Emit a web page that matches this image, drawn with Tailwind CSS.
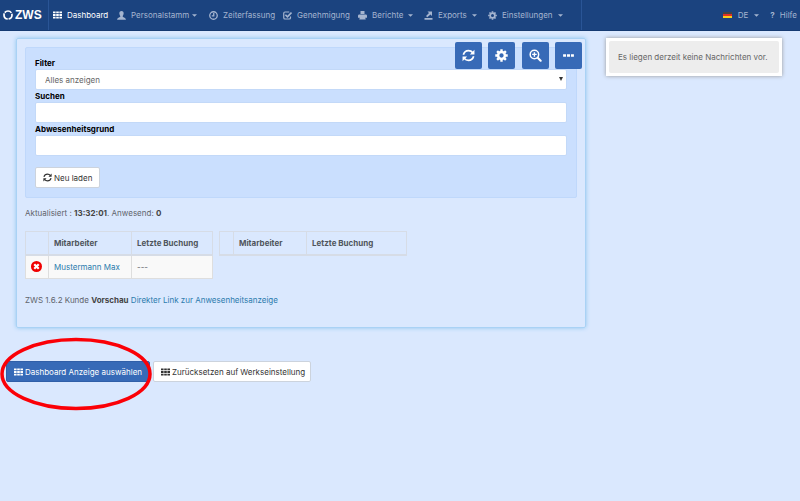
<!DOCTYPE html>
<html lang="de">
<head>
<meta charset="utf-8">
<meta name="viewport" content="width=device-width, initial-scale=1">
<title>ZWS Dashboard</title>
<script src="https://cdn.jsdelivr.net/npm/@tailwindcss/browser@4"></script>
</head>
<body class="min-h-screen bg-[#dae8fe] font-[Inter,'Liberation_Sans',Arial,sans-serif] text-[8px] leading-[12px] text-[#5f646c]">

<svg class="hidden" aria-hidden="true">
  <symbol id="grid" viewBox="0 0 9 8"><path fill="currentColor" d="M0 .5h2.600v1.800H0zM3.200.5h2.600v1.800H3.200zM6.400.5H9v1.800H6.400zM0 3.100h2.600v1.800H0zM3.200 3.100h2.600v1.800H3.200zM6.400 3.100H9v1.800H6.400zM0 5.700h2.600v1.800H0zM3.200 5.700h2.600v1.800H3.200zM6.400 5.700H9v1.800H6.400z"/></symbol>
  <symbol id="refresh" viewBox="0 0 24 24"><path fill="none" stroke="currentColor" stroke-width="3.200" d="M2.500 10.500C4 5.500 7.500 3 12 3c3.300 0 6 1.500 8 4M21.500 13.500C20 18.500 16.500 21 12 21c-3.300 0-6-1.500-8-4"/><path fill="currentColor" d="M23 1.500V10h-8.500zM1 22.500V14h8.500z"/></symbol>
  <symbol id="gear" viewBox="0 0 24 24"><circle cx="12" cy="12" r="6.300" fill="none" stroke="currentColor" stroke-width="4.600"/><path stroke="currentColor" stroke-width="4.400" d="M12 .5v4M12 19.500v4M.5 12h4M19.500 12h4M3.900 3.900l2.800 2.800M17.300 17.300l2.800 2.800M3.900 20.100l2.800-2.800M17.300 6.700l2.800-2.800"/></symbol>
  <symbol id="zoomin" viewBox="0 0 24 24"><circle cx="10" cy="10" r="7.800" fill="none" stroke="currentColor" stroke-width="2.800"/><path fill="none" stroke="currentColor" stroke-width="2.600" d="M10 5.800v8.400M5.800 10h8.400"/><path stroke="currentColor" stroke-width="4" stroke-linecap="round" d="M16.500 16.500l5 5"/></symbol>
  <symbol id="dots" viewBox="0 0 24 24"><path fill="currentColor" d="M2 9.500h5.500v5H2zM9.250 9.500h5.500v5h-5.500zM16.500 9.500H22v5h-5.500z"/></symbol>
  <symbol id="caret" viewBox="0 0 10 6"><path fill="currentColor" d="M0 .5h10L5 5.500z"/></symbol>
</svg>

<header class="flex h-[31px] items-stretch border-b border-[#153a72] bg-[#1b437f] text-[#a5b5d0]">
  <a href="#" class="flex w-[49px] shrink-0 items-center border-r border-[#2a5596] pl-[3px]" aria-label="ZWS">
    <svg class="h-[10px] w-[10px]" viewBox="0 0 20 20" aria-hidden="true"><circle cx="10" cy="10" r="8" fill="none" stroke="#fff" stroke-width="3.400" stroke-dasharray="15 1.750" stroke-dashoffset="4"/></svg>
    <span class="ml-[2px] font-['Liberation_Sans',Arial,sans-serif] text-[12px] leading-[14px] font-bold text-white">ZWS</span>
  </a>
  <nav class="flex w-[533px] shrink-0 items-center gap-[8px] border-r border-[#2a5596] pl-[4px] whitespace-nowrap" aria-label="Hauptmenü">
    <a href="#" class="flex w-[56px] items-center gap-[5px] text-white"><svg class="h-[8px] w-[9px] shrink-0"><use href="#grid"/></svg>Dashboard</a>
    <a href="#" class="flex w-[84px] items-center gap-[5px]">
      <svg class="h-[9px] w-[9px] shrink-0" viewBox="0 0 18 18"><path fill="currentColor" d="M9 0c3 0 4.500 2 4.300 5-.2 2.500-1.300 3.500-1.800 5v1.500c1.500 1.500 6 1.500 6.500 6H0c.5-4.500 5-4.500 6.500-6V10C6 8.500 4.900 7.500 4.700 5 4.500 2 6 0 9 0z"/></svg>Personalstamm<svg class="-ml-[2px] h-[3px] w-[5px] shrink-0"><use href="#caret"/></svg></a>
    <a href="#" class="flex w-[66px] items-center gap-[5px]">
      <svg class="h-[9px] w-[9px] shrink-0" viewBox="0 0 18 18"><path fill="none" stroke="currentColor" stroke-width="2.600" d="M16.500 9a7.500 7.500 0 1 1-15 0 7.500 7.500 0 0 1 15 0zM9.500 4v5.800H5.500"/></svg>Zeiterfassung</a>
    <a href="#" class="flex w-[67px] items-center gap-[5px]">
      <svg class="h-[9px] w-[9px] shrink-0" viewBox="0 0 18 18"><path fill="none" stroke="currentColor" stroke-width="2.400" d="M12.500 2H4Q1.500 2 1.500 4.500v9Q1.500 16 4 16h8.500q2.500 0 2.500-2.500V11"/><path fill="none" stroke="currentColor" stroke-width="3.200" d="M4.800 7.500l4 4L17 3"/></svg>Genehmigung</a>
    <a href="#" class="flex w-[58px] items-center gap-[5px]">
      <svg class="h-[9px] w-[9px] shrink-0" viewBox="0 0 18 18"><path fill="currentColor" d="M5 0h8v6H5zM1.500 7h15L18 9v4.500H0V9zM4 12h10l1.500 5h-13z"/></svg>Berichte<svg class="h-[3px] w-[5px] shrink-0"><use href="#caret"/></svg></a>
    <a href="#" class="flex w-[56px] items-center gap-[5px]">
      <svg class="h-[9px] w-[9px] shrink-0" viewBox="0 0 18 18"><path fill="currentColor" d="M1 14h16v3.500H1zM7 1h9v9l-3-3-6.500 5.500-2.500-2.500L10 4z"/></svg>Exports<svg class="h-[3px] w-[5px] shrink-0"><use href="#caret"/></svg></a>
    <a href="#" class="flex items-center gap-[5px]"><svg class="h-[9px] w-[9px] shrink-0"><use href="#gear"/></svg>Einstellungen<svg class="h-[3px] w-[5px] shrink-0"><use href="#caret"/></svg></a>
  </nav>
  <div class="ml-auto flex items-center gap-[11px] pr-[3px] whitespace-nowrap">
    <a href="#" class="flex items-center gap-[6px]">
      <svg class="h-[6px] w-[9px] shrink-0" viewBox="0 0 9 6"><path fill="#444" d="M0 0h9v2H0z"/><path fill="#e03024" d="M0 2h9v2H0z"/><path fill="#f8ce1a" d="M0 4h9v2H0z"/></svg>DE<svg class="h-[3px] w-[5px] shrink-0"><use href="#caret"/></svg></a>
    <a href="#" class="flex items-center gap-[5px]"><b>?</b>Hilfe</a>
  </div>
</header>

<main class="pt-[7px]">
  <div class="grid grid-cols-[minmax(0,570fr)_minmax(0,176fr)] items-start gap-[20px] pr-[18px] pl-[16px]">
    <section class="relative rounded-[2px] border border-[#a9d2f5] px-[8px] pt-[8px] pb-[21px] shadow-[0_0_4px_#8fc6ef]">
      <div class="absolute top-[3px] right-[3px] flex w-[127px] justify-between text-white">
        <button type="button" aria-label="Aktualisieren" class="flex h-[27px] w-[27px] items-center justify-center rounded-[2px] bg-[#376ab7]"><svg class="h-[13px] w-[13px]"><use href="#refresh"/></svg></button>
        <button type="button" aria-label="Einstellungen" class="flex h-[27px] w-[27px] items-center justify-center rounded-[2px] bg-[#376ab7]"><svg class="h-[13px] w-[13px]"><use href="#gear"/></svg></button>
        <button type="button" aria-label="Vergrößern" class="flex h-[27px] w-[27px] items-center justify-center rounded-[2px] bg-[#376ab7]"><svg class="h-[13px] w-[13px]"><use href="#zoomin"/></svg></button>
        <button type="button" aria-label="Mehr" class="flex h-[27px] w-[27px] items-center justify-center rounded-[2px] bg-[#376ab7]"><svg class="h-[13px] w-[13px]"><use href="#dots"/></svg></button>
      </div>

      <form class="rounded-[2px] border border-[#bfd8fb] bg-[#cadffe] px-[9px] pt-[9px] pb-[9px]">
        <label for="filter" class="block h-[12px] font-bold text-black">Filter</label>
        <div class="relative">
          <select id="filter" class="block h-[21px] w-full appearance-none rounded-[2px] border border-[#c3d9f8] bg-white px-[9px] leading-[12px] text-[#666]"><option>Alles anzeigen</option></select>
          <svg class="pointer-events-none absolute top-[8px] right-[4px] h-[4px] w-[4px] text-[#333]" viewBox="0 0 8 8"><path fill="currentColor" d="M0 0h8L4 8z"/></svg>
        </div>
        <label for="suchen" class="block h-[12px] font-bold text-black">Suchen</label>
        <input id="suchen" type="text" class="block h-[21px] w-full rounded-[2px] border border-[#c3d9f8] bg-white px-[9px]">
        <label for="grund" class="block h-[12px] font-bold text-black">Abwesenheitsgrund</label>
        <input id="grund" type="text" class="block h-[21px] w-full rounded-[2px] border border-[#c3d9f8] bg-white px-[9px]">
        <button type="button" class="mt-[11px] flex h-[21px] items-center gap-[2px] rounded-[2px] border border-[#ccd3dd] bg-white px-[7px] text-[#333]"><svg class="h-[9px] w-[9px]"><use href="#refresh"/></svg>Neu laden</button>
      </form>

      <p class="mt-[9px]">Aktualisiert : <b class="text-[#444]">13:32:01</b>. Anwesend: <b class="text-[#444]">0</b></p>

      <div class="mt-[12px] flex items-start gap-[6px]">
        <table class="w-[188px] table-fixed border-collapse text-left">
          <thead><tr class="h-[23px] text-[#50555c]">
            <th class="w-[23px] border border-b-2 border-[#d6dce6]"></th>
            <th class="w-[83px] border border-b-2 border-[#d6dce6] px-[5px]">Mitarbeiter</th>
            <th class="border border-b-2 border-[#d6dce6] px-[5px]">Letzte Buchung</th>
          </tr></thead>
          <tbody><tr class="h-[24px] bg-[#f9f9f9]">
            <td class="border border-[#dedede] px-[5px]"><svg class="h-[11px] w-[11px]" viewBox="0 0 22 22" role="img" aria-label="Abwesend"><circle cx="11" cy="11" r="11" fill="#f00000"/><path stroke="#fff" stroke-width="4.400" d="M6.500 6.500l9 9M15.500 6.500l-9 9"/></svg></td>
            <td class="border border-[#dedede] px-[5px]"><a href="#" class="text-[#2b7bad]">Mustermann Max</a></td>
            <td class="border border-[#dedede] px-[5px]">---</td>
          </tr></tbody>
        </table>
        <table class="w-[188px] table-fixed border-collapse text-left">
          <thead><tr class="h-[23px] text-[#50555c]">
            <th class="w-[14px] border border-b-2 border-[#d6dce6]"></th>
            <th class="w-[73px] border border-b-2 border-[#d6dce6] px-[5px]">Mitarbeiter</th>
            <th class="border border-b-2 border-[#d6dce6] px-[5px]">Letzte Buchung</th>
          </tr></thead>
        </table>
      </div>

      <p class="mt-[15px]">ZWS 1.6.2 Kunde <b class="text-[#444]">Vorschau</b> <a href="#" class="text-[#2b7bad]">Direkter Link zur Anwesenheitsanzeige</a></p>
    </section>

    <aside class="bg-white p-[3px] shadow-[0_0_4px_#999]">
      <p class="rounded-[2px] bg-[#ededed] px-[9px] py-[10px] whitespace-nowrap text-[#666]">Es liegen derzeit keine Nachrichten vor.</p>
    </aside>
  </div>

  <div class="relative mt-[33px] flex gap-[3px] px-[6px]">
    <button type="button" class="flex h-[21px] w-[144px] items-center gap-[2px] rounded-[2px] border border-[#305fa8] bg-[#376ab7] px-[7px] whitespace-nowrap text-white"><svg class="h-[8px] w-[9px] shrink-0"><use href="#grid"/></svg>Dashboard Anzeige auswählen</button>
    <button type="button" class="flex h-[21px] w-[158px] items-center gap-[2px] rounded-[2px] border border-[#ccd3dd] bg-white px-[7px] whitespace-nowrap text-[#333]"><svg class="h-[8px] w-[9px] shrink-0"><use href="#grid"/></svg>Zurücksetzen auf Werkseinstellung</button>
    <svg class="pointer-events-none absolute -top-[24px] left-0 h-[75px] w-[152px]" viewBox="0 0 152 75" aria-hidden="true"><ellipse cx="76" cy="37" rx="74" ry="34.500" fill="none" stroke="#fb0007" stroke-width="3.500"/></svg>
  </div>
</main>
</body>
</html>
